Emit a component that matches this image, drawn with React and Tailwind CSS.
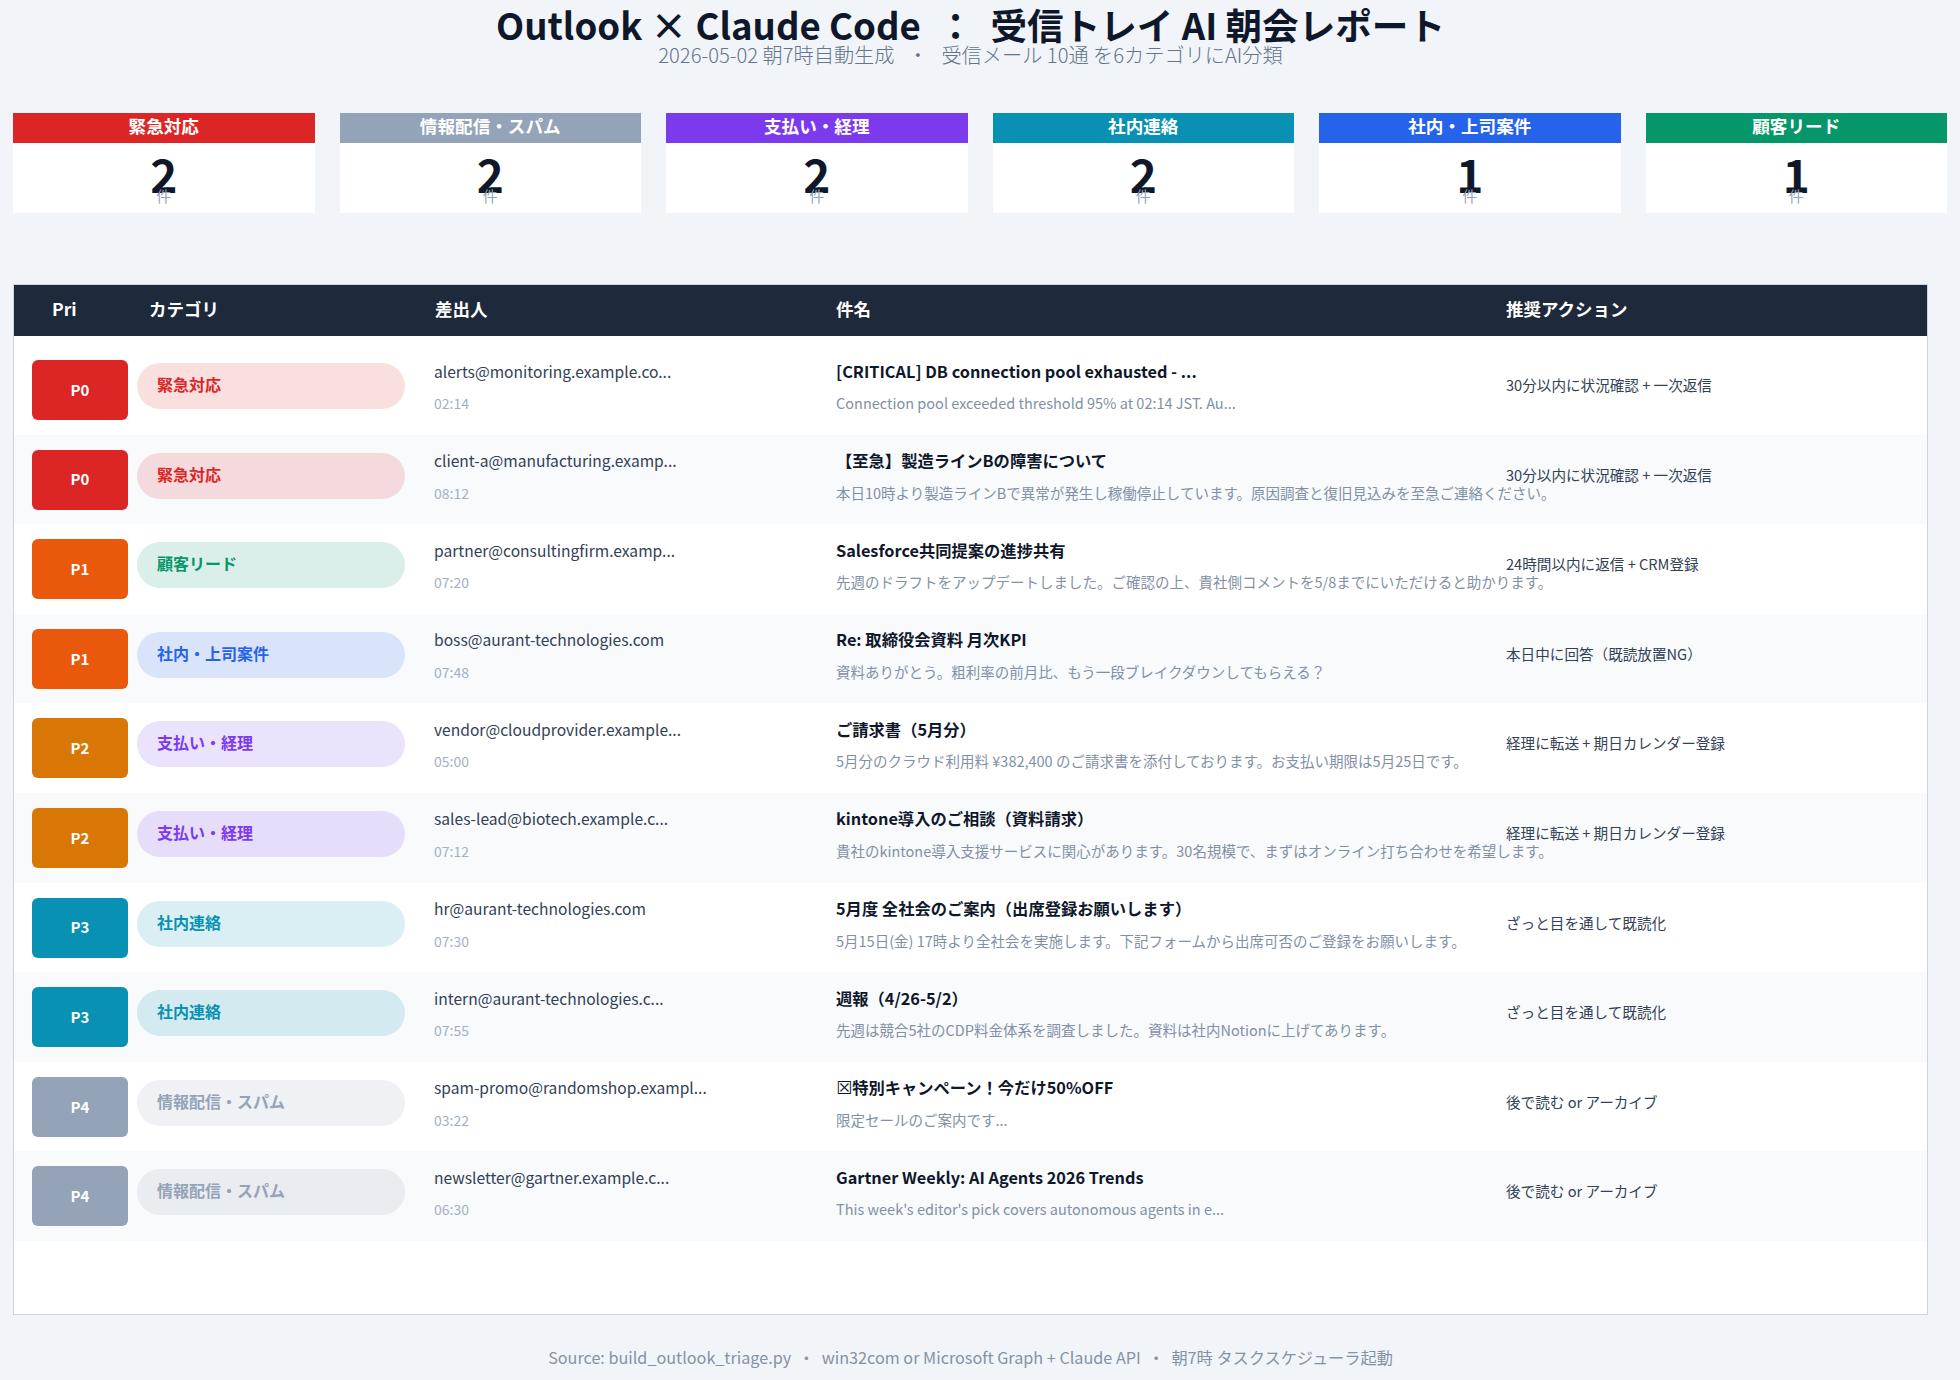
import React from "react";

const cards = [
  { label: "緊急対応", count: 2, head: "bg-[#dc2626]" },
  { label: "情報配信・スパム", count: 2, head: "bg-[#94a3b8]" },
  { label: "支払い・経理", count: 2, head: "bg-[#7c3aed]" },
  { label: "社内連絡", count: 2, head: "bg-[#0891b2]" },
  { label: "社内・上司案件", count: 1, head: "bg-[#2563eb]" },
  { label: "顧客リード", count: 1, head: "bg-[#059669]" },
];

const pri = {
  P0: "bg-[#dc2626]",
  P1: "bg-[#ea580c]",
  P2: "bg-[#d97706]",
  P3: "bg-[#0891b2]",
  P4: "bg-[#94a3b8]",
};

const cat = {
  urgent: { label: "緊急対応", cls: "bg-[#dc2626]/15 text-[#dc2626]" },
  lead: { label: "顧客リード", cls: "bg-[#059669]/15 text-[#059669]" },
  boss: { label: "社内・上司案件", cls: "bg-[#2563eb]/15 text-[#2563eb]" },
  pay: { label: "支払い・経理", cls: "bg-[#7c3aed]/15 text-[#7c3aed]" },
  inner: { label: "社内連絡", cls: "bg-[#0891b2]/15 text-[#0891b2]" },
  spam: { label: "情報配信・スパム", cls: "bg-[#94a3b8]/15 text-[#94a3b8]" },
};

const rows = [
  { p: "P0", c: "urgent", from: "alerts@monitoring.example.co...", time: "02:14", subject: "[CRITICAL] DB connection pool exhausted - ...", desc: "Connection pool exceeded threshold 95% at 02:14 JST. Au...", action: "30分以内に状況確認 + 一次返信" },
  { p: "P0", c: "urgent", from: "client-a@manufacturing.examp...", time: "08:12", subject: "【至急】製造ラインBの障害について", desc: "本日10時より製造ラインBで異常が発生し稼働停止しています。原因調査と復旧見込みを至急ご連絡ください。", action: "30分以内に状況確認 + 一次返信" },
  { p: "P1", c: "lead", from: "partner@consultingfirm.examp...", time: "07:20", subject: "Salesforce共同提案の進捗共有", desc: "先週のドラフトをアップデートしました。ご確認の上、貴社側コメントを5/8までにいただけると助かります。", action: "24時間以内に返信 + CRM登録" },
  { p: "P1", c: "boss", from: "boss@aurant-technologies.com", time: "07:48", subject: "Re: 取締役会資料 月次KPI", desc: "資料ありがとう。粗利率の前月比、もう一段ブレイクダウンしてもらえる？", action: "本日中に回答（既読放置NG）" },
  { p: "P2", c: "pay", from: "vendor@cloudprovider.example...", time: "05:00", subject: "ご請求書（5月分）", desc: "5月分のクラウド利用料 ¥382,400 のご請求書を添付しております。お支払い期限は5月25日です。", action: "経理に転送 + 期日カレンダー登録" },
  { p: "P2", c: "pay", from: "sales-lead@biotech.example.c...", time: "07:12", subject: "kintone導入のご相談（資料請求）", desc: "貴社のkintone導入支援サービスに関心があります。30名規模で、まずはオンライン打ち合わせを希望します。", action: "経理に転送 + 期日カレンダー登録" },
  { p: "P3", c: "inner", from: "hr@aurant-technologies.com", time: "07:30", subject: "5月度 全社会のご案内（出席登録お願いします）", desc: "5月15日(金) 17時より全社会を実施します。下記フォームから出席可否のご登録をお願いします。", action: "ざっと目を通して既読化" },
  { p: "P3", c: "inner", from: "intern@aurant-technologies.c...", time: "07:55", subject: "週報（4/26-5/2）", desc: "先週は競合5社のCDP料金体系を調査しました。資料は社内Notionに上げてあります。", action: "ざっと目を通して既読化" },
  { p: "P4", c: "spam", mark: "☒", from: "spam-promo@randomshop.exampl...", time: "03:22", subject: "特別キャンペーン！今だけ50%OFF", desc: "限定セールのご案内です...", action: "後で読む or アーカイブ" },
  { p: "P4", c: "spam", from: "newsletter@gartner.example.c...", time: "06:30", subject: "Gartner Weekly: AI Agents 2026 Trends", desc: "This week's editor's pick covers autonomous agents in e...", action: "後で読む or アーカイブ" },
];

export default function App() {
  return (
    <div className="w-[1960px] h-[1380px] overflow-hidden bg-[#f1f5f9] font-['Noto_Sans_CJK_JP','Noto_Sans',sans-serif] text-[#0f172a]">
      {/* title */}
      <div className="w-[1941px] flex flex-col items-center">
        <h1 className="text-[36.6px] leading-[50px] font-semibold whitespace-pre">Outlook × Claude Code  ：  受信トレイ AI 朝会レポート</h1>
        <p className="text-[20.2px] leading-[28px] -mt-[9px] text-[#64748b] font-light whitespace-pre">2026-05-02 朝7時自動生成   ・   受信メール 10通 を6カテゴリにAI分類</p>
      </div>

      {/* cards */}
      <div className="mt-[44px] ml-[13px] w-[1934px] grid grid-cols-6 gap-[25px]">
        {cards.map((c) => (
          <div key={c.label} className="h-[100px] bg-white">
            <div className={`h-[30px] pb-[3px] flex items-center justify-center text-white text-[17.6px] font-semibold ${c.head}`}>{c.label}</div>
            <div className="flex flex-col items-center">
              <div className="mt-[7px] h-[46px] text-[46px] leading-[46px] font-semibold">{c.count}</div>
              <div className="relative -mt-[9px] text-[15px] leading-[18px] text-[#94a3b8]">件</div>
            </div>
          </div>
        ))}
      </div>

      {/* table */}
      <div className="mt-[71px] ml-[13px] w-[1915px] h-[1031px] bg-white border border-[#cbd5e1]">
        <div className="h-[51px] pb-[2px] bg-[#1e293b] text-white text-[17.5px] font-semibold flex items-center">
          <div className="w-[135px] pl-[38px]">Pri</div>
          <div className="w-[286px]">カテゴリ</div>
          <div className="w-[401px]">差出人</div>
          <div className="w-[670px]">件名</div>
          <div>推奨アクション</div>
        </div>
        <div className="pt-[9px]">
          {rows.map((r, i) => (
            <div key={i} className={`h-[89.6px] flex items-start ${i % 2 ? "bg-[#f8fafc]" : "bg-white"}`}>
              <div className={`ml-[18px] mt-[15px] w-[96px] h-[60px] rounded-[6px] flex items-center justify-center text-white text-[15px] font-semibold ${pri[r.p]}`}>{r.p}</div>
              <div className={`ml-[9px] mt-[18px] w-[268px] h-[46px] rounded-[23px] pl-[20px] pb-[4px] flex items-center text-[16px] font-semibold ${cat[r.c].cls}`}>{cat[r.c].label}</div>
              <div className="ml-[29px] w-[402px] mt-[13.5px] whitespace-nowrap">
                <div className="text-[15.6px] leading-[24px] text-[#334155]">{r.from}</div>
                <div className="mt-[10.5px] text-[14px] leading-[20px] text-[#a3b0c2]">{r.time}</div>
              </div>
              <div className="w-[669px] mt-[13.5px] whitespace-nowrap">
                <div className="text-[16.3px] leading-[24px] font-semibold">
                  {r.mark && <span className="font-['DejaVu_Sans'] font-normal text-[18px] leading-none">{r.mark}</span>}
                  {r.subject}
                </div>
                <div className="mt-[10.5px] text-[14.5px] leading-[20px] text-[#8290a5]">{r.desc}</div>
              </div>
              <div className="ml-[1px] mt-[30px] text-[14.6px] leading-[20px] text-[#334155] whitespace-nowrap">{r.action}</div>
            </div>
          ))}
        </div>
      </div>

      {/* footer */}
      <div className="w-[1941px] mt-[30px] text-center text-[16.2px] leading-[24px] text-[#8492a6] whitespace-pre">Source: build_outlook_triage.py  ・  win32com or Microsoft Graph + Claude API  ・  朝7時 タスクスケジューラ起動</div>
    </div>
  );
}
